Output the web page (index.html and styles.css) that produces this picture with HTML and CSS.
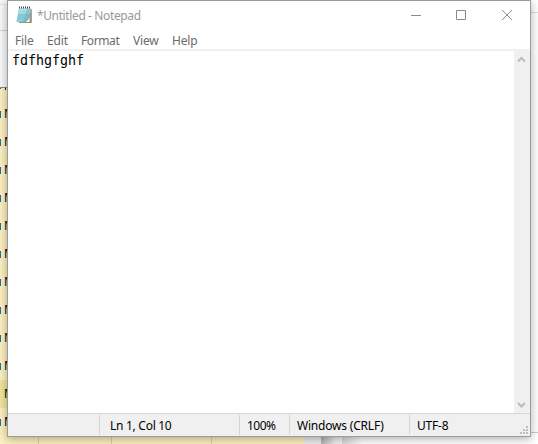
FILE: index.html
```html
<!DOCTYPE html>
<html lang="en">
<head>
<meta charset="utf-8">
<title>*Untitled - Notepad</title>
<link rel="stylesheet" href="styles.css">
</head>
<body>
<div class="desktop">
  <div class="sheet">
    <div class="sheet-head"><div class="head-line"></div></div>
    <div class="row first"><i></i><b></b></div>
    <div class="row"><i></i><span>M</span></div>
    <div class="row"><i></i><span>M</span></div>
    <div class="row"><i></i><span>M</span></div>
    <div class="row"><i></i><span>M</span></div>
    <div class="row"><i></i><span>M</span></div>
    <div class="row"><i></i><span>M</span></div>
    <div class="row"><i></i><span>M</span></div>
    <div class="row"><i></i><span>M</span></div>
    <div class="row"><i></i><span>M</span></div>
    <div class="row"><i></i><span>M</span></div>
    <div class="row selected"><span>M</span></div>
    <div class="row last"><i></i><span>M</span></div>
  </div>
  <div class="gutter"></div>
  <div class="edge"></div>
  <div class="page"><div class="page-top"></div><div class="page-mid"></div><div class="page-end"></div></div>
</div>
<main class="window">
  <header class="titlebar">
    <svg class="app-icon" width="18" height="18" viewBox="0 0 18 18">
      <path d="M14 3H15.8V17H3V16H13Z" fill="#a08f68"/>
      <path d="M3 2H14.8L13.3 16H.3Z" fill="#8bcbd8"/>
      <path d="M3 2H14.8L14 8H1.6Z" fill="#b3e0e8"/>
      <path d="M11 3H14.6L13.3 16H7Z" fill="#5fa9bc" opacity=".5"/>
      <path d="M3 5.5H12M2.5 7.5H12M2 9.5H11.5M2 11.5H11" stroke="#7cc0cf" stroke-width=".5"/>
      <path d="M10 16L13.8 12L13.3 16Z" fill="#eef5f4"/>
      <path d="M3 1.5H14" stroke="#454b4e" stroke-width="2" stroke-dasharray="1 1"/>
    </svg>
    <span class="title">*Untitled - Notepad</span>
    <div class="controls">
      <svg width="12" height="12" viewBox="0 0 12 12"><path d="M1 6.5H11"/></svg>
      <svg width="12" height="12" viewBox="0 0 12 12"><path d="M1.5 1.5H10.5V10.5H1.5Z"/></svg>
      <svg width="12" height="12" viewBox="0 0 12 12"><path d="M1 1L11 11M11 1L1 11"/></svg>
    </div>
  </header>
  <nav class="menu"><span class="m-file">File</span><span class="m-edit">Edit</span><span class="m-format">Format</span><span class="m-view">View</span><span>Help</span></nav>
  <section class="editor">
    <div class="text">fdfhgfghf</div>
    <div class="scrollbar">
      <svg width="9" height="8" viewBox="0 0 9 8"><path d="M1 5.5L4.5 2L8 5.5"/></svg>
      <svg width="9" height="8" viewBox="0 0 9 8"><path d="M1 2L4.5 5.5L8 2"/></svg>
    </div>
  </section>
  <footer class="status">
    <div class="cell c-empty"></div>
    <div class="cell c-pos"><span>Ln 1, Col 10</span></div>
    <div class="cell c-zoom"><span>100%</span></div>
    <div class="cell c-eol"><span>Windows (CRLF)</span></div>
    <div class="cell c-enc"><span>UTF-8</span></div>
    <svg class="grip" width="8" height="8" viewBox="0 0 8 8"><path d="M6 0h2v2h-2zM3 3h2v2h-2zM6 3h2v2h-2zM0 6h2v2h-2zM3 6h2v2h-2zM6 6h2v2h-2z"/></svg>
  </footer>
</main>
</body>
</html>
```
FILE: styles.css
```css
* { box-sizing: border-box; }
body {
  margin: 0;
  width: 538px;
  height: 444px;
  overflow: hidden;
  position: relative;
  background: #fff;
  font-family: "Noto Sans", sans-serif;
  font-size: 12px;
}
.desktop { display: flex; height: 444px; }
.sheet { width: 304px; overflow: hidden; }
.sheet-head {
  height: 88px;
  padding-top: 4px;
  background: #f8f8f8;
  border-bottom: 1px solid #888;
}
.head-line { height: 27px; border-top: 1px solid #e2e2e2; border-bottom: 1px solid #d0d0d0; }
.row {
  display: flex;
  align-items: center;
  height: 28px;
  padding-left: 4px;
  background: #fcf0c0;
  color: #000;
  font: 12px/28px "Noto Sans", sans-serif;
  position: relative;
}
.row i {
  position: absolute;
  left: 0;
  top: 11px;
  width: 1px;
  height: 7px;
  background: #0878a8;
}
.row.first { height: 12px; align-items: flex-start; padding-left: 5px; }
.row.first i { top: 0; height: 1px; }
.row.first b { width: 1px; height: 2px; background: #211; }
.row.selected { background: #f1e59b; }
.row.last {
  height: 36px;
  align-items: flex-start;
  background:
    linear-gradient(90deg, transparent 38px, #e3d096 38px, #e3d096 39px, transparent 39px, transparent 111px, #e3d096 111px, #e3d096 112px, transparent 112px, transparent 211px, #e3d096 211px, #e3d096 212px, transparent 212px),
    #fcf0c0;
}
.gutter { width: 17px; background: #ececec; }
.edge { width: 21px; background: linear-gradient(90deg, #b2b2b2, #ececec 14px, #f4f4f4); }
.page { flex: 1; background: linear-gradient(90deg, #d8d8d8, #fff 20px); }
.page-top { height: 13px; border-bottom: 1px solid #ddd; }
.page-mid { height: 420px; border-bottom: 1px solid #ccc; }
.window {
  position: absolute;
  left: 7px;
  top: 0;
  width: 524px;
  height: 437px;
  display: flex;
  flex-direction: column;
  background: #fff;
  border: 1px solid #9c9c9c;
  box-shadow: 0 2px 9px rgba(0, 0, 0, .32);
}
.titlebar { display: flex; align-items: center; height: 28px; padding: 0 17px 0 8px; }
.title { margin-left: 3px; padding-top: 2px; color: #999; letter-spacing: -.38px; line-height: 28px; }
.controls { display: flex; gap: 33.5px; margin-left: auto; }
.controls svg { fill: none; stroke: #8b8b8b; stroke-width: 1; }
.controls svg:nth-child(2) { margin-right: .5px; margin-left: -.5px; }
.menu { display: flex; height: 20px; padding-left: 7px; line-height: 24px; color: #6b6b6b; letter-spacing: -.15px; }
.m-file { width: 32px; }
.m-edit { width: 34px; }
.m-format { width: 52px; letter-spacing: -.4px; }
.m-view { width: 39px; }
.editor { flex: 1; display: flex; border-top: 2px solid #f0f0f0; background: #fff; }
.text {
  flex: 1;
  padding: 1px 0 0 4px;
  font: 13.3px/18px "DejaVu Sans Mono", monospace;
  color: #000;
}
.scrollbar {
  width: 16px;
  display: flex;
  flex-direction: column;
  justify-content: space-between;
  align-items: center;
  padding: 5px 1px 4px 0;
  background: #f0f0f0;
}
.scrollbar svg { fill: none; stroke: #bbb; stroke-width: 2; }
.status {
  display: flex;
  height: 23px;
  padding-top: 1px;
  border-top: 1px solid #d7d7d7;
  background: #f0f0f0;
  color: #000;
  position: relative;
}
.cell { height: 20px; line-height: 21px; border-right: 1px solid #d5d5d5; white-space: nowrap; }
.c-empty { width: 92px; }
.c-pos { width: 140px; padding-left: 10px; letter-spacing: -.28px; }
.c-zoom { width: 50px; padding-left: 7px; letter-spacing: -.55px; }
.c-eol { width: 120px; padding-left: 7px; letter-spacing: -.2px; }
.c-enc { padding-left: 7px; border: 0; letter-spacing: -.2px; }
.grip { position: absolute; right: 2px; bottom: 2px; fill: #bfbfbf; }
```
